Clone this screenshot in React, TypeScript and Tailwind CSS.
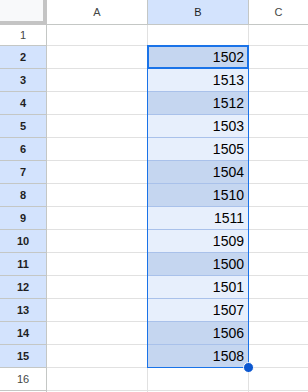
const values: { v: number; dark: boolean }[] = [
  { v: 1502, dark: true },
  { v: 1513, dark: false },
  { v: 1512, dark: true },
  { v: 1503, dark: false },
  { v: 1505, dark: false },
  { v: 1504, dark: true },
  { v: 1510, dark: true },
  { v: 1511, dark: false },
  { v: 1509, dark: false },
  { v: 1500, dark: true },
  { v: 1501, dark: false },
  { v: 1507, dark: false },
  { v: 1506, dark: true },
  { v: 1508, dark: true },
];

function RowHeader({ n, selected }: { n: number; selected: boolean }) {
  return (
    <div
      className={
        selected
          ? "h-[23px] flex items-center justify-center border-r border-b border-[#c4c7c5] bg-[#d3e3fd] text-[11px] font-bold text-[#1f1f1f]"
          : "h-[23px] flex items-center justify-center border-r border-b border-[#c4c7c5] bg-white text-[11px] text-[#444746]"
      }
    >
      {n}
    </div>
  );
}

export default function App() {
  return (
    <div
      className="relative w-[308px] h-[392px] overflow-hidden bg-white"
      style={{ fontFamily: '"Liberation Sans", Arial, sans-serif' }}
    >
      <div className="grid grid-cols-[47px_101px_101px_1fr]">
        {/* header row */}
        <div className="h-[25px] bg-[#f8f9fa] border-r-4 border-b-4 border-[#c4c4c4]" />
        <div className="h-[25px] flex items-center justify-center border-r border-b border-[#c4c7c5] text-[11px] text-[#444746]">
          A
        </div>
        <div className="h-[25px] flex items-center justify-center border-r border-b border-[#c4c7c5] bg-[#d3e3fd] text-[11px] text-[#1f1f1f]">
          B
        </div>
        <div className="h-[25px] flex items-center justify-center border-b border-[#c4c7c5] text-[11px] text-[#444746]">
          C
        </div>

        {/* row 1 */}
        <div className="h-[21px] flex items-center justify-center border-r border-b border-[#c4c7c5] text-[11px] text-[#444746]">
          1
        </div>
        <div className="h-[21px] border-r border-b border-[#e1e1e1]" />
        <div className="h-[21px] border-r border-b border-[#e1e1e1]" />
        <div className="h-[21px] border-b border-[#e1e1e1]" />

        {values.map((item, i) => (
          <div key={item.v} className="contents">
            <RowHeader n={i + 2} selected />
            <div className="h-[23px] border-r border-b border-[#e1e1e1]" />
            <div
              className={
                (item.dark ? "bg-[#c5d6f0] " : "bg-[#e7effc] ") +
                "h-[23px] flex items-center justify-end pr-[4px] pt-[1px] border-r border-b border-[#a9c1ea] text-[14px] text-black"
              }
            >
              {item.v}
            </div>
            <div className="h-[23px] border-b border-[#e1e1e1]" />
          </div>
        ))}

        {/* row 16 */}
        <RowHeader n={16} selected={false} />
        <div className="h-[23px] border-r border-b border-[#e1e1e1]" />
        <div className="h-[23px] border-r border-b border-[#e1e1e1]" />
        <div className="h-[23px] border-b border-[#e1e1e1]" />
        <div className="h-[23px] border-r border-[#c4c7c5]" />
        <div className="h-[23px] border-r border-[#e1e1e1]" />
        <div className="h-[23px] border-r border-[#e1e1e1]" />
        <div className="h-[23px]" />
      </div>

      {/* selected range */}
      <div className="absolute left-[147px] top-[45px] w-[102px] h-[323px] border border-[#1a73e8]" />
      {/* active cell */}
      <div className="absolute left-[147px] top-[45px] w-[102px] h-[24px] border-2 border-[#1a73e8]" />
      {/* fill handle */}
      <div className="absolute left-[243px] top-[362px] w-[11px] h-[11px] rounded-full bg-[#0b57d0] border-[1.5px] border-white" />
    </div>
  );
}
